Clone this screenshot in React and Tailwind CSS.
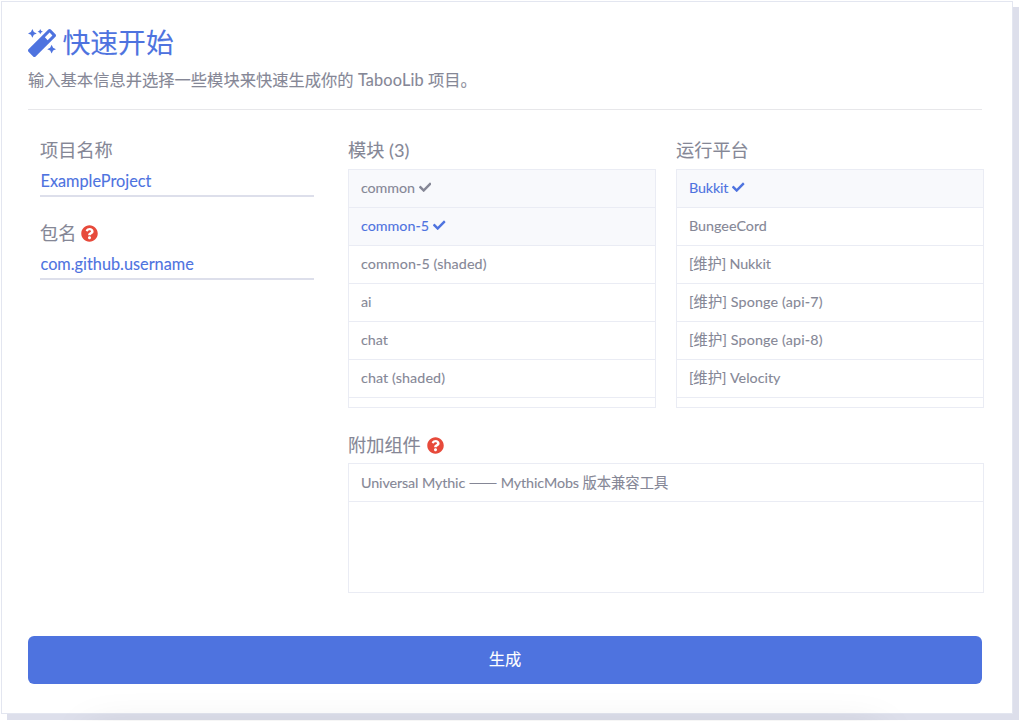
import { FaMagic, FaCheck, FaQuestionCircle } from "react-icons/fa";

const modules = [
  { name: "common", checked: true, tracking: "tracking-[-0.1px]" },
  { name: "common-5", checked: true, active: true },
  { name: "common-5 (shaded)", tracking: "tracking-[0.1px]" },
  { name: "ai" },
  { name: "chat" },
  { name: "chat (shaded)", tracking: "tracking-[0.1px]" },
];

const platforms = [
  { name: "Bukkit", checked: true, active: true, tracking: "tracking-[-0.15px]" },
  { name: "BungeeCord" },
  { name: "[维护] Nukkit", tracking: "tracking-[-0.1px]" },
  { name: "[维护] Sponge (api-7)", tracking: "tracking-[0.15px]" },
  { name: "[维护] Sponge (api-8)", tracking: "tracking-[0.15px]" },
  { name: "[维护] Velocity" },
];

const addons = [
  {
    name: "Universal Mythic",
    label: (
      <>
        <span className="tracking-[-0.1px]">Universal Mythic </span>
        <span className="font-['Noto_Sans_CJK_SC'] text-[17px] leading-[14px]">——</span>
        <span className="tracking-[-0.1px]"> MythicMobs </span>
        版本兼容工具
      </>
    ),
  },
];

function Heading({ children, help, gap = "ml-[6px]" }) {
  return (
    <h2 className="flex h-[28px] items-center whitespace-pre text-[18.2px] leading-[28px]">
      {children}
      {help && <FaQuestionCircle className={`size-[17px] text-[#e74a3b] ${gap}`} />}
    </h2>
  );
}

function List({ items, className }) {
  return (
    <ul className={`overflow-hidden border border-[#eaecf4] ${className}`}>
      {items.map((item) => (
        <li
          key={item.name}
          className={`flex h-[38px] items-center gap-[4px] border-b border-[#eaecf4] px-[12px] text-[14.3px] ${
            item.checked ? "bg-[#f8f9fc]" : "bg-white"
          } ${item.active ? "text-[#4e73df]" : ""}`}
        >
          <span className={item.tracking}>{item.label ?? item.name}</span>
          {item.checked && <FaCheck className="size-[12.5px]" />}
        </li>
      ))}
    </ul>
  );
}

function Field({ label, value, help }) {
  return (
    <div>
      <Heading help={help} gap="ml-[4.5px]">{label}</Heading>
      <input
        className="mt-[3px] block h-[30px] w-[274px] border-b-2 border-[#dddfeb] bg-transparent px-[0.5px] pb-[2px] text-[16.3px] text-[#4e73df] outline-none"
        defaultValue={value}
      />
    </div>
  );
}

export default function App() {
  return (
    <div className="relative h-[721px] w-[1020px] overflow-hidden bg-white pl-px pt-px font-['Lato','Noto_Sans_CJK_SC',sans-serif] text-[#858796] [-webkit-text-stroke:0.1px]">
      <main className="h-[713px] w-[1012px] border border-[#e3e6f0] bg-white px-[26px] pt-[25px] shadow-[6px_6px_0_#dddfeb]">
        <h1 className="flex h-[32px] items-center gap-[7px] text-[27.8px] leading-[32px] text-[#4e73df]">
          <FaMagic className="-ml-[0.5px] -mt-px size-[28px]" />
          快速开始
        </h1>
        <p className="mt-[8px] h-[26px] text-[16.3px] leading-[26px]">
          输入基本信息并选择一些模块来快速生成你的
          <span className="tracking-[0.15px]"> TabooLib </span>
          项目。
        </p>
        <hr className="mt-[16px] w-[954px] border-[#e7e7ea]" />
        <div className="flex pl-[12px] pt-[26px]">
          <section className="flex w-[308px] flex-col gap-[22px]">
            <Field label="项目名称" value="ExampleProject" />
            <Field label="包名" value="com.github.username" help />
          </section>
          <div>
            <div className="flex gap-[20px]">
              <section>
                <Heading>模块 (3)</Heading>
                <List items={modules} className="mt-[5px] h-[239px] w-[308px] [&>li]:pb-[2px]" />
              </section>
              <section>
                <Heading>运行平台</Heading>
                <List items={platforms} className="mt-[5px] h-[239px] w-[308px] [&>li]:pb-[2px]" />
              </section>
            </div>
            <section className="mt-[23px]">
              <Heading help>附加组件</Heading>
              <List items={addons} className="mt-[4px] h-[130px] w-[636px]" />
            </section>
          </div>
        </div>
        <button className="mt-[43px] h-[48px] w-[954px] rounded-[6px] bg-[#4e73df] pb-px text-[16.3px] text-white">
          生成
        </button>
      </main>
      <div className="pointer-events-none absolute left-[90px] top-[733px] h-[40px] w-[790px] shadow-[0_0_44px_rgba(0,0,0,0.13)]" />
    </div>
  );
}
